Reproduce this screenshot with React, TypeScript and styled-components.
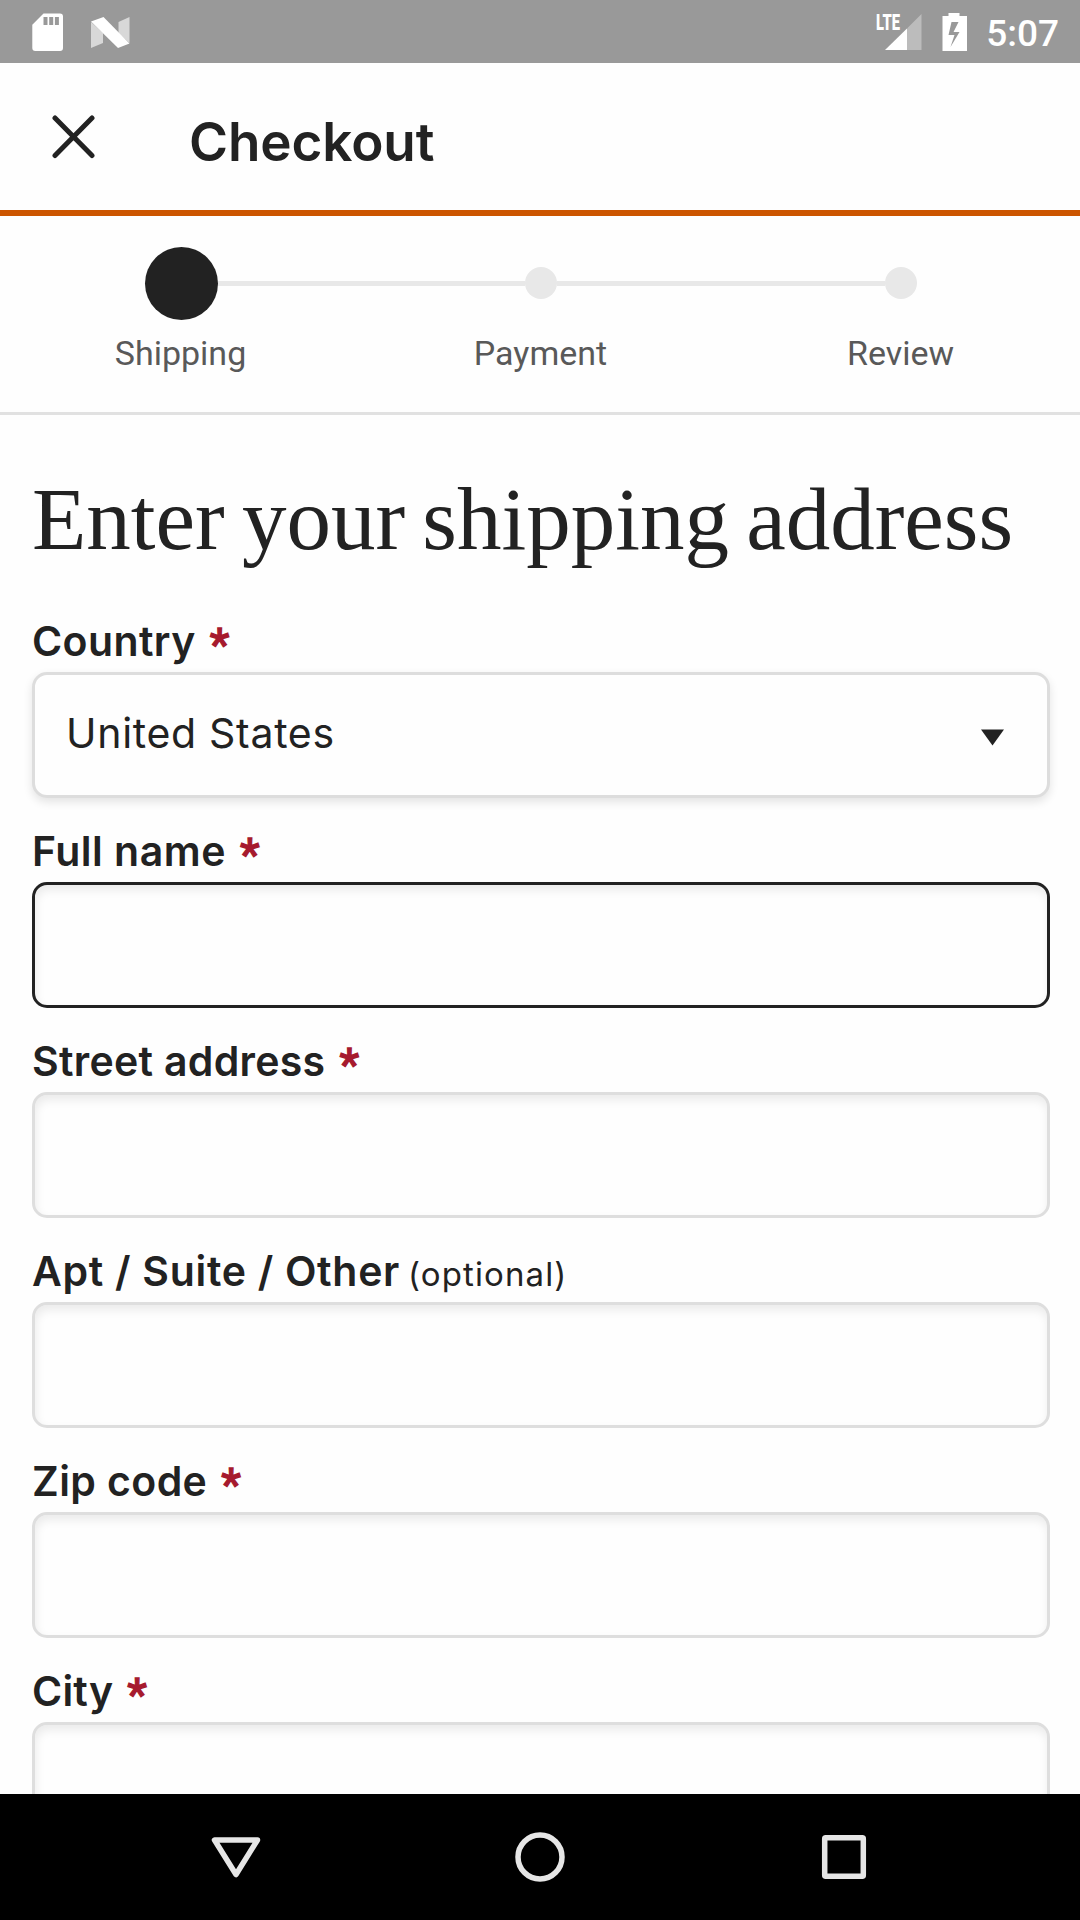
import React from "react";
import styled, { createGlobalStyle } from "styled-components";

const GlobalStyle = createGlobalStyle`
  * { box-sizing: border-box; }
  body { margin: 0; background: #fefefe; }
`;

const ui = `Inter, "Liberation Sans", sans-serif`;
const ink = "#222222";

const Screen = styled.div`
  display: flex;
  flex-direction: column;
  width: 1080px;
  height: 1920px;
  overflow: hidden;
  background: #fefefe;
  color: ${ink};
  font-family: ${ui};
`;

const StatusBar = styled.header`
  display: flex;
  flex: none;
  justify-content: space-between;
  height: 63px;
  padding: 0 21px 0 30px;
  background: #999999;
`;

const StatusGroup = styled.div<{ $gap: number }>`
  display: flex;
  align-items: center;
  gap: ${(p) => p.$gap}px;
`;

const SignalIcon = styled.svg`
  overflow: visible;
`;

const Clock = styled.span`
  font: 500 37px/63px Roboto, sans-serif;
  color: #ffffff;
  padding-top: 3px;
`;

const AppBar = styled.div`
  display: flex;
  flex: none;
  align-items: center;
  height: 153px;
  padding-left: 51px;
  border-bottom: 6px solid #cc5500;
`;

const CloseButton = styled.button`
  display: flex;
  width: 45px;
  height: 45px;
  margin: 0 93px 1px 0;
  padding: 0;
  border: 0;
  background: none;
`;

const Title = styled.h1`
  margin: 11px 0 0;
  font-size: 53px;
  font-weight: 600;
  line-height: 64px;
  letter-spacing: -0.1px;
`;

const Steps = styled.nav`
  display: grid;
  flex: none;
  grid-template-columns: repeat(3, 360px);
  height: 199px;
  padding-left: 1px;
  border-bottom: 3px solid #e1e1e1;
`;

const Step = styled.div`
  display: flex;
  flex-direction: column;
  align-items: center;
  padding-top: 30px;
`;

const Track = styled.div`
  display: flex;
  align-items: center;
  width: 100%;
  height: 74px;
`;

const Line = styled.span<{ $on: boolean }>`
  flex: 1;
  height: 5px;
  background: ${(p) => (p.$on ? "#e8e8e8" : "transparent")};
`;

const Dot = styled.span<{ $active: boolean }>`
  width: ${(p) => (p.$active ? 73 : 32)}px;
  height: ${(p) => (p.$active ? 73 : 32)}px;
  border-radius: 50%;
  background: ${(p) => (p.$active ? ink : "#e8e8e8")};
`;

const StepLabel = styled.span`
  margin: 13px 1px 0 0;
  font: 400 34px/40px Roboto, sans-serif;
  color: #595959;
`;

const Form = styled.main`
  flex: 1;
  min-height: 0;
  overflow: hidden;
  padding: 54px 30px 0 32px;
`;

const Heading = styled.h2`
  height: 119px;
  margin: 0;
  font: 400 89px/100px "Liberation Serif", serif;
  word-spacing: -5px;
  white-space: nowrap;
`;

const Field = styled.div`
  display: flex;
  flex-direction: column;
  height: 210px;
`;

const Label = styled.label`
  display: flex;
  align-items: baseline;
  height: 84px;
  padding-top: 28px;
  font-size: 41px;
  font-weight: 600;
  line-height: 50px;
  white-space: pre;
`;

const LabelText = styled.span<{ $spacing: number }>`
  letter-spacing: ${(p) => p.$spacing}px;
`;

const Required = styled.span`
  margin-left: 14px;
  font: 500 44px/50px Roboto, sans-serif;
  color: #a61a2e;
  -webkit-text-stroke: 1.3px #a61a2e;
  transform: translateY(4px);
`;

const Optional = styled.span`
  margin-left: 8px;
  font-size: 33px;
  font-weight: 400;
  letter-spacing: 1.1px;
`;

const box = `
  width: 1018px;
  height: 126px;
  border-radius: 15px;
`;

const TextInput = styled.input<{ $focused: boolean }>`
  ${box}
  padding: 0 35px;
  border: ${(p) => (p.$focused ? `3px solid ${ink}` : "3px solid #dedede")};
  outline: 0;
  background: #fefefe;
  box-shadow: inset 1px 5px 10px rgba(0, 0, 0, 0.08);
  font: 400 41px ${ui};
`;

const Select = styled.div`
  ${box}
  display: flex;
  align-items: center;
  justify-content: space-between;
  padding: 0 43px 5px 31px;
  border: 3px solid #dddddd;
  background: #fefefe;
  box-shadow: 0 4px 10px rgba(0, 0, 0, 0.11);
  font-size: 41px;
  font-weight: 400;
  letter-spacing: 0.7px;
`;

const Caret = styled.svg`
  margin-top: 9px;
`;

const NavBar = styled.footer`
  display: flex;
  flex: none;
  align-items: center;
  justify-content: center;
  gap: 244px;
  height: 126px;
  background: #000000;
`;

const fields = [
  { label: "Full name", required: true, focused: true, spacing: 0.5 },
  { label: "Street address", required: true, focused: false, spacing: 0.3 },
  { label: "Apt / Suite / Other", required: false, focused: false, spacing: 0.7 },
  { label: "Zip code", required: true, focused: false, spacing: 0.4 },
  { label: "City", required: true, focused: false, spacing: 0.2 },
];

const steps = ["Shipping", "Payment", "Review"];

export default function App() {
  return (
    <Screen>
      <GlobalStyle />
      <StatusBar>
        <StatusGroup $gap={25}>
          <svg width="35" height="40" viewBox="30 11 35 40">
            <path
              fill="#fff"
              fillRule="evenodd"
              d="M43.5 12.5H60a3 3 0 0 1 3 3V47a3 3 0 0 1-3 3H35.3a3 3 0 0 1-3-3V23.8ZM43.5 16v8h4v-8Zm5.7 0v8h4v-8Zm5.7 0v8h4v-8Z"
            />
          </svg>
          <svg width="40" height="40" viewBox="90 11 40 40">
            <path fill="#d8d8d8" d="M91 21l12 11v10l-12 5zM129.500 16v26l-11-10V21z" />
            <path fill="#fff" d="M91 20.500L103.500 16l26 26.500-11.500 4.500z" />
          </svg>
        </StatusGroup>
        <StatusGroup $gap={19}>
          <SignalIcon width="48" height="40" viewBox="875 11 48 40">
            <path fill="#bcbcbc" d="M921.500 13v36H907V27.500z" />
            <path fill="#fff" d="M907 27.500V49h-22z" />
            <text
              x="876"
              y="29"
              fill="#fff"
              fontFamily="Roboto, sans-serif"
              fontWeight="900"
              fontSize="21.500"
              textLength="24"
              lengthAdjust="spacingAndGlyphs"
            >
              LTE
            </text>
          </SignalIcon>
          <svg width="25" height="40" viewBox="942.500 11 25 40">
            <path
              fill="#fff"
              fillRule="evenodd"
              d="M949 12h11v3h7.500v35H943V15h6ZM952 21l-3 13h6l-4 12 9-15h-6l5-10Z"
            />
          </svg>
          <Clock>5:07</Clock>
        </StatusGroup>
      </StatusBar>
      <AppBar>
        <CloseButton aria-label="Close">
          <svg width="45" height="45" viewBox="0 0 45 45">
            <path
              d="M4 4l37 37.500M41 4l-37 37.500"
              stroke={ink}
              strokeWidth="5"
              strokeLinecap="round"
            />
          </svg>
        </CloseButton>
        <Title>Checkout</Title>
      </AppBar>
      <Steps>
        {steps.map((name, i) => (
          <Step key={name}>
            <Track>
              <Line $on={i > 0} />
              <Dot $active={i === 0} />
              <Line $on={i < 2} />
            </Track>
            <StepLabel>{name}</StepLabel>
          </Step>
        ))}
      </Steps>
      <Form>
        <Heading>Enter your shipping address</Heading>
        <Field>
          <Label>
            <LabelText $spacing={0.4}>Country</LabelText>
            <Required>*</Required>
          </Label>
          <Select>
            <span>United States</span>
            <Caret width="23" height="17" viewBox="0 0 23 17">
              <path d="M0 0.500h23L11.500 16.500z" fill={ink} />
            </Caret>
          </Select>
        </Field>
        {fields.map((f) => (
          <Field key={f.label}>
            <Label>
              <LabelText $spacing={f.spacing}>{f.label}</LabelText>
              {f.required ? <Required>*</Required> : <Optional>(optional)</Optional>}
            </Label>
            <TextInput $focused={f.focused} />
          </Field>
        ))}
      </Form>
      <NavBar>
        <svg width="60" height="60" viewBox="-30 -30 60 60" fill="none">
          <path
            d="M-21.500-17h43L0 17.500z"
            stroke="#e6e6e6"
            strokeWidth="5.500"
            strokeLinejoin="round"
          />
        </svg>
        <svg width="60" height="60" viewBox="-30 -30 60 60" fill="none">
          <circle r="22" stroke="#e6e6e6" strokeWidth="5.500" />
        </svg>
        <svg width="60" height="60" viewBox="-30 -30 60 60" fill="none">
          <rect
            x="-19.300"
            y="-19.300"
            width="38.600"
            height="38.600"
            rx="1"
            stroke="#e6e6e6"
            strokeWidth="5.500"
          />
        </svg>
      </NavBar>
    </Screen>
  );
}
